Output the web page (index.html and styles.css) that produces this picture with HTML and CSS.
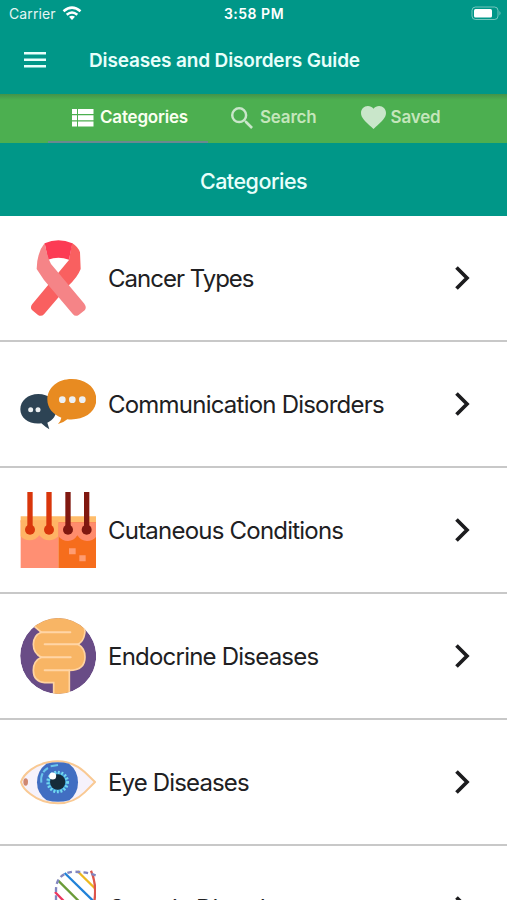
FILE: index.html
```html
<!DOCTYPE html>
<html lang="en">
<head>
<meta charset="utf-8">
<title>Diseases and Disorders Guide</title>
<link rel="stylesheet" href="styles.css">
</head>
<body>
<svg class="defs" width="0" height="0" aria-hidden="true">
  <symbol id="chevron" viewBox="0 0 18 28"><path d="M3.5 3.5 14 14 3.5 24.500" fill="none" stroke="#1c1c1e" stroke-width="3.700"/></symbol>
</svg>
<div class="app">
  <header class="top">
    <div class="status">
      <div class="carrier"><span>Carrier</span>
        <svg width="20" height="15" viewBox="0 0 20 15" fill="none" stroke="#fff" stroke-width="2.600"><path d="M1.500 5.200Q10-2 18.500 5.200M4.700 8.700Q10 4.300 15.300 8.700"/><path d="M7 10.800Q10 8.700 13 10.800L10 14Z" fill="#fff" stroke="none"/></svg>
      </div>
      <span class="time">3:58 PM</span>
      <svg class="battery" width="31" height="15" viewBox="0 0 31 15"><rect x="1" y="1" width="26" height="12.500" rx="3.500" fill="none" stroke="#fff" stroke-opacity=".45"/><rect x="3" y="3" width="18" height="8.500" rx="1.500" fill="#fff"/><path d="M28.500 5q2 2.200 0 4.500Z" fill="#fff" fill-opacity=".5"/></svg>
    </div>
    <div class="appbar">
      <svg class="menu" width="24" height="16" viewBox="0 0 24 16" fill="#e8fffb"><path d="M1 0h22v2.600H1zM1 6.500h22v2.600H1zM1 13h22v2.600H1z"/></svg>
      <h1>Diseases and Disorders Guide</h1>
    </div>
  </header>
  <nav class="tabs">
    <a class="tab active"><svg width="22" height="18" viewBox="0 0 22 18" fill="#fff"><path d="M0 0h5v5H0zM6 0H21.500v5H6zM0 6.300h5v5H0zM6 6.300H21.500v5H6zM0 12.600h5v5H0zM6 12.600H21.500v5H6z"/></svg><span>Categories</span></a>
    <a class="tab search"><svg width="22" height="22" viewBox="3 3 17.500 17.500" fill="#c9e6ca"><path d="M15.500 14h-.79l-.28-.27A6.471 6.471 0 0 0 16 9.500 6.500 6.500 0 1 0 9.500 16c1.610 0 3.090-.59 4.230-1.570l.27.28v.79l5 4.990L20.490 19l-4.990-5zm-6 0C7.010 14 5 11.990 5 9.500S7.010 5 9.500 5 14 7.010 14 9.500 11.990 14 9.500 14z"/></svg><span>Search</span></a>
    <a class="tab saved"><svg width="25" height="23" viewBox="2 3 20 18.350" fill="#c9e6ca"><path d="M12 21.350l-1.450-1.320C5.400 15.360 2 12.280 2 8.500 2 5.420 4.420 3 7.500 3c1.740 0 3.410.81 4.500 2.090C13.090 3.810 14.760 3 16.500 3 19.580 3 22 5.420 22 8.500c0 3.780-3.400 6.860-8.550 11.540L12 21.350z"/></svg><span>Saved</span></a>
  </nav>
  <h2 class="heading">Categories</h2>
  <main class="list">
    <div class="row">
      <svg class="pic" viewBox="60 45 228 228"><path d="M240 82 242 132Q232 158 205 182L132 268Q124 276 114 270L96 255Q89 248 97 237L207 105 216 54Q234 65 240 82Z" fill="#f96060"/><path d="M134 55Q175 36 217 55L207 104Q175 92 144 104Z" fill="#fc3b54"/><path d="M134 54Q111 82 110 132L132 165 219 268Q226 276 236 270L254 256Q261 248 253 236L153 117Q143 100 134 54Z" fill="#f58487"/></svg>
      <span class="label l1">Cancer Types</span><svg class="chev"><use href="#chevron"/></svg>
    </div>
    <div class="row">
      <svg class="pic" viewBox="60 48 228 228"><path d="M115 132C84 132 61 152 61 178 61 206 90 225 124 220Q136 231 148 238L142 218C160 211 169 195 169 178 169 152 146 132 115 132Z" fill="#2d4354"/><path d="M215 87C174 87 142 112 142 149 142 172 158 193 184 203Q182 215 174 222 191 218 202 208C250 213 289 187 289 149 289 112 257 87 215 87Z" fill="#e88b21"/><g fill="#edf0f2"><circle cx="187" cy="149" r="10"/><circle cx="217" cy="149" r="10"/><circle cx="247" cy="149" r="10"/><circle cx="92" cy="179" r="7.500"/><circle cx="114" cy="179" r="7.500"/></g></svg>
      <span class="label l2">Communication Disorders</span><svg class="chev"><use href="#chevron"/></svg>
    </div>
    <div class="row">
      <svg class="pic" viewBox="60 51 228 228"><path d="M62 136H175V279H62Z" fill="#ff8f73"/><path d="M175 136H289V279H175Z" fill="#f66d1c"/><path d="M62 124H289V142H62Z" fill="#ffbd6b"/><path d="M62 136H175V184Q163 196 148 196 129 196 118 181 107 196 89 196 72 196 62 184Z" fill="#ffb365"/><path d="M175 142H289V185Q279 198 261 198 243 198 232 181 222 198 204 198 186 198 175 184Z" fill="#ff8c6d"/><g fill="#d9360b"><path d="M82 51H98V155H82ZM139 51H155V155H139Z"/><circle cx="90" cy="164" r="15"/><circle cx="147" cy="164" r="15"/></g><g fill="#801810"><path d="M196 51H212V155H196ZM252 51H268V155H252Z"/><circle cx="204" cy="164" r="15"/><circle cx="260" cy="164" r="15"/></g><path d="M207 220H227V238H207ZM238 241H257V259H238Z" fill="#ff9c71"/></svg>
      <span class="label l3">Cutaneous Conditions</span><svg class="chev"><use href="#chevron"/></svg>
    </div>
    <div class="row">
      <svg class="pic" viewBox="60 54 228 228"><clipPath id="disc"><circle cx="174.500" cy="168" r="114"/></clipPath><g clip-path="url(#disc)"><circle cx="174.500" cy="168" r="114" fill="#694c86"/><path d="M98 72 180 40 250 76Q258 90 253 106 250 123 234 133 255 145 255 171 255 211 208 211V290H161V248H134Q100 245 100 211 100 183 124 172 100 160 100 133 100 107 124 97L104 80Z" fill="#f8b565" stroke="#ffd3a0" stroke-width="5"/><path d="M122 97H211M236 133H134M122 172H212M208 211H134" fill="none" stroke="#ffd5a6" stroke-width="6" stroke-linecap="round"/></g></svg>
      <span class="label l4">Endocrine Diseases</span><svg class="chev"><use href="#chevron"/></svg>
    </div>
    <div class="row">
      <svg class="pic" viewBox="60 27 228 228"><path d="M63 141Q68 122 94 103 132 78 174 79 222 81 254 111L285 141 254 172Q220 205 174 205 126 205 91 177 68 160 63 141Z" fill="#f6f2fb" stroke="#f9c993" stroke-width="6"/><path d="M139 86Q174 78 207 86 234 107 234 142 234 176 208 196 174 205 140 196 111 176 111 142 111 107 139 86Z" fill="#416ec2"/><circle cx="173" cy="141" r="30" fill="#3c9bd8"/><circle cx="173" cy="141" r="29" fill="none" stroke="#74d8ef" stroke-width="10" stroke-dasharray="5.500 5"/><circle cx="173" cy="141" r="23" fill="#152b39"/><circle cx="158" cy="123" r="10.500" fill="#fff"/><path d="M124 143Q120 112 144 99M152 94 174 90" fill="none" stroke="#6bc5eb" stroke-width="6" stroke-dasharray="29 4"/><ellipse cx="77" cy="141" rx="7" ry="11" fill="#cf8770"/></svg>
      <span class="label l5">Eye Diseases</span><svg class="chev"><use href="#chevron"/></svg>
    </div>
    <div class="row">
      <svg class="pic" viewBox="60 120 228 228"><g fill="none" stroke-width="7"><path d="M232 123 286 176" stroke="#edb91f"/><path d="M194 129 280 213" stroke="#2182d8"/><path d="M174 151 240 217" stroke="#6a9b38"/><path d="M165 186 200 222" stroke="#eb365e"/><path d="M273 122Q292 165 282 220" stroke="#dd554b"/><path d="M287 136Q260 126 222 125 168 130 168 180V220" stroke="#8286c0" stroke-dasharray="14 10"/></g></svg>
      <span class="label l6">Genetic Disorders</span><svg class="chev"><use href="#chevron"/></svg>
    </div>
  </main>
</div>
</body>
</html>
```
FILE: styles.css
```css
* { box-sizing: border-box; }
body { margin: 0; background: #fff; font-family: Inter, Roboto, sans-serif; color: #202022; }
h1, h2 { margin: 0; }
svg { display: block; flex: none; }
.defs { position: absolute; }
.app { width: 507px; height: 900px; overflow: hidden; }
.top { height: 94px; background: #009788; color: #fff; }
.status { height: 27px; display: grid; grid-template-columns: 1fr auto 1fr; align-items: center; padding: 0 5px 0 9px; }
.carrier { display: flex; align-items: center; gap: 6px; font-size: 14px; color: #e5f5f3; letter-spacing: .1px; }
.time { font-size: 14px; font-weight: 600; letter-spacing: .5px; margin-right: 3px; }
.battery { justify-self: end; }
.appbar { height: 67px; display: flex; align-items: center; padding: 0 0 1px 23px; gap: 42px; }
h1 { font-size: 19px; line-height: 24px; font-weight: 600; color: #e8fffb; white-space: nowrap; letter-spacing: -.15px; padding-top: 2px; }
.tabs { height: 49px; padding-left: 48px; display: flex; background: linear-gradient(#43934a, #4caf50 6px); font-size: 17px; font-weight: 600; letter-spacing: -.2px; color: #c4e6bb; }
.tab { display: flex; align-items: center; gap: 7px; padding-bottom: 2px; }
.active { width: 160px; padding: 0 0 0 24px; border-bottom: 2px solid #6b8990; color: #fafff0; gap: 6px; }
.search { padding-left: 23px; }
.saved { padding-left: 44px; gap: 5px; }
.tab span { line-height: 22px; padding-bottom: 1px; }
.heading { height: 73px; display: flex; align-items: center; justify-content: center; background: #009788; color: #e8fffb; font-size: 21.500px; font-weight: 500; letter-spacing: -.5px; padding-top: 2px; }
.row { height: 126px; display: flex; align-items: center; padding: 0 36px 0 20px; border-bottom: 2px solid #c8c8c8; }
.pic { width: 76px; height: 76px; }
.label { flex: 1; margin-left: 12px; padding-top: 2px; font-size: 24px; line-height: 30px; white-space: nowrap; letter-spacing: -.78px; }
.l1 { letter-spacing: -1px; }
.l5 { letter-spacing: -.85px; }
.chev { width: 18px; height: 28px; }
```
